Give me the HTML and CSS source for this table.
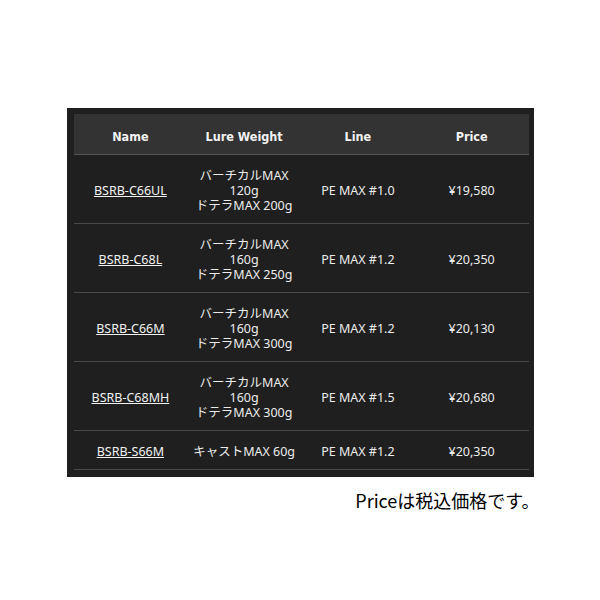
FILE: index.html
```html
<!DOCTYPE html>
<html lang="ja">
<head>
<meta charset="utf-8">
<link rel="stylesheet" href="styles.css">
</head>
<body>
<div class="wrap">
  <div class="box">
    <table class="spec">
      <thead>
        <tr><th>Name</th><th>Lure Weight</th><th>Line</th><th>Price</th></tr>
      </thead>
      <tbody>
        <tr><td><a href="#">BSRB-C66UL</a></td><td>バーチカルMAX<br>120g<br>ドテラMAX 200g</td><td>PE MAX #1.0</td><td>¥19,580</td></tr>
        <tr><td><a href="#">BSRB-C68L</a></td><td>バーチカルMAX<br>160g<br>ドテラMAX 250g</td><td>PE MAX #1.2</td><td>¥20,350</td></tr>
        <tr><td><a href="#">BSRB-C66M</a></td><td>バーチカルMAX<br>160g<br>ドテラMAX 300g</td><td>PE MAX #1.2</td><td>¥20,130</td></tr>
        <tr><td><a href="#">BSRB-C68MH</a></td><td>バーチカルMAX<br>160g<br>ドテラMAX 300g</td><td>PE MAX #1.5</td><td>¥20,680</td></tr>
        <tr><td><a href="#">BSRB-S66M</a></td><td>キャストMAX 60g</td><td>PE MAX #1.2</td><td>¥20,350</td></tr>
      </tbody>
    </table>
  </div>
  <p class="note">Priceは税込価格です。</p>
</div>
</body>
</html>
```
FILE: styles.css
```css
html, body {
  margin: 0;
  padding: 0;
  background: #fff;
}
.wrap {
  width: 467px;
  margin: 108px auto 0;
}
.box {
  background: #1f1f1f;
  padding: 6px 5px 7px 7px;
}
.spec {
  width: 455px;
  border-collapse: collapse;
  table-layout: fixed;
  font-family: "Noto Sans", "Noto Sans CJK JP", sans-serif;
  font-size: 12.5px;
  line-height: 15px;
  color: #ececec;
}
.spec th {
  background: #333333;
  height: 36px;
  padding: 4px 0 0;
  font-family: "DejaVu Sans Condensed", "DejaVu Sans", sans-serif;
  font-stretch: condensed;
  font-weight: bold;
  font-size: 12.5px;
  color: #f2f2f2;
  text-align: center;
  border-bottom: 1px solid #555;
}
.spec td {
  text-align: center;
  height: 15px;
  padding: 13px 0 10px;
  border-bottom: 1px solid #4a4a4a;
  vertical-align: middle;
}
.spec a {
  color: #f2f2f2;
  text-decoration: underline;
}
.note {
  margin: 13px -6px 0 0;
  text-align: right;
  font-family: "Noto Sans CJK JP", "Noto Sans", sans-serif;
  font-size: 18px;
  line-height: 20px;
  color: #000;
}
```
